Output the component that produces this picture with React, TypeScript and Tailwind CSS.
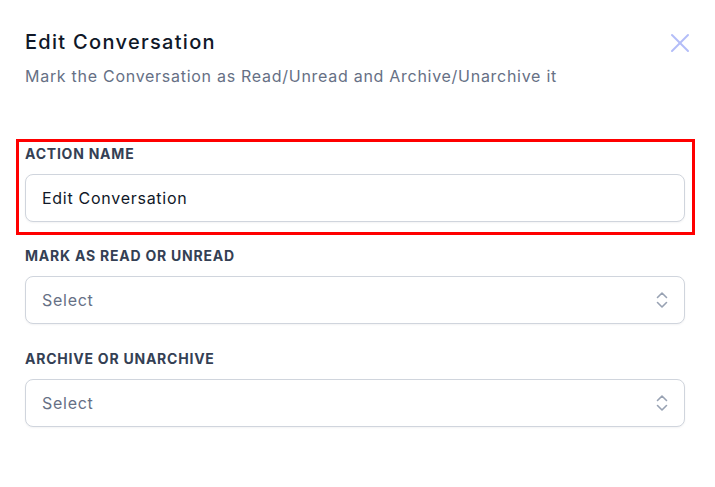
import React from "react";

function Chevrons() {
  return (
    <svg width="12" height="18" viewBox="0 0 12 18" fill="none" stroke="#98a2b3" strokeWidth="1.6" strokeLinecap="round" strokeLinejoin="round">
      <path d="M1.5 6.5 L6 2 L10.5 6.5" />
      <path d="M1.5 11.5 L6 16 L10.5 11.5" />
    </svg>
  );
}

function Label({ children }: { children: React.ReactNode }) {
  return (
    <div className="h-5 mb-[10px] text-[14px] leading-5 font-bold text-[#344054] tracking-[0.055em]">{children}</div>
  );
}

function SelectBox() {
  return (
    <div className="h-12 rounded-lg border border-[#d0d5dd] bg-white shadow-[0_1px_2px_rgba(16,24,40,0.05)] flex items-center justify-between pl-4 pr-[16px]">
      <span className="text-[16px] text-[#667085] tracking-[0.045em]">Select</span>
      <Chevrons />
    </div>
  );
}

export default function App() {
  return (
    <div className="w-[715px] h-[487px] bg-white pl-[25px] pr-[30px] pt-[28px]" style={{ fontFamily: "Inter, 'Noto Sans', sans-serif" }}>
      <div className="flex items-start justify-between">
        <div>
          <div className="text-[20px] leading-7 font-medium text-[#101828] tracking-[0.065em]">Edit Conversation</div>
          <div className="mt-2 text-[16px] leading-6 text-[#667085] tracking-[0.045em]">Mark the Conversation as Read/Unread and Archive/Unarchive it</div>
        </div>
        <svg className="mt-[5px] -mr-[5px]" width="20" height="20" viewBox="0 0 20 20" fill="none" stroke="#b3bdf8" strokeWidth="2" strokeLinecap="round">
          <path d="M2 2 L18 18" />
          <path d="M18 2 L2 18" />
        </svg>
      </div>

      <div className="mt-[51px] -ml-[9px] -mr-[10px] border-[3px] border-[#ff0000] pl-[6px] pr-[7px] pt-[2px] pb-[10px]">
        <Label>ACTION NAME</Label>
        <div className="h-12 rounded-lg border border-[#d0d5dd] bg-white shadow-[0_1px_2px_rgba(16,24,40,0.05)] flex items-center pl-4">
          <span className="text-[16px] text-[#101828] tracking-[0.045em]">Edit Conversation</span>
        </div>
      </div>

      <div className="mt-[11px]">
        <Label>MARK AS READ OR UNREAD</Label>
        <SelectBox />
      </div>

      <div className="mt-[25px]">
        <Label>ARCHIVE OR UNARCHIVE</Label>
        <SelectBox />
      </div>
    </div>
  );
}
